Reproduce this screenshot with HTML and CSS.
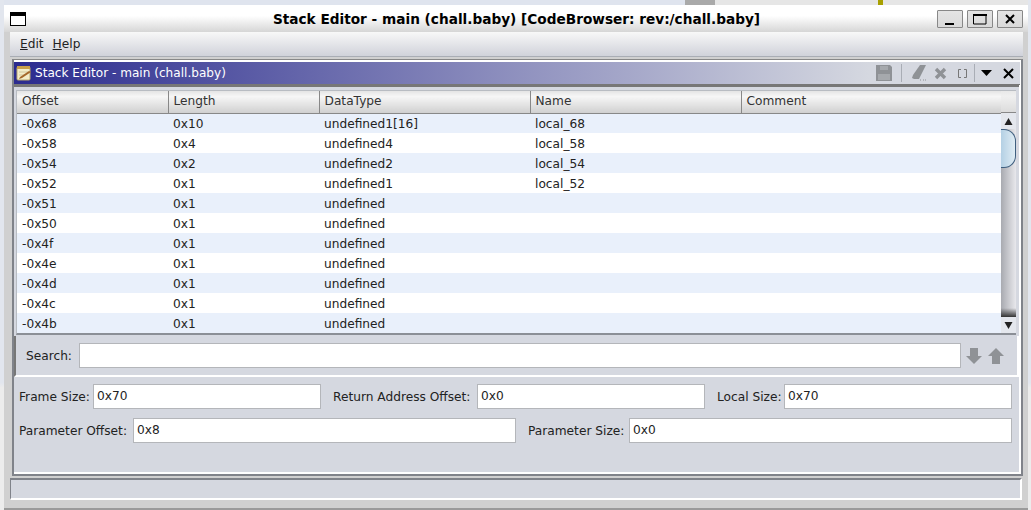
FILE: index.html
```html
<!DOCTYPE html>
<html lang="en">
<head>
  <meta charset="UTF-8" />
  <title>Stack Editor - main (chall.baby)</title>
  <link rel="stylesheet" href="styles.css">
</head>
<body>
  <div class="desktop-strip"></div>
  <div class="window">
    <div class="titlebar">
      <svg class="win-menu" width="16" height="14" viewBox="0 0 16 14"><rect x="0.5" y="0.5" width="15" height="13" fill="#fff" stroke="#000"/><rect x="0" y="0" width="16" height="4" fill="#000"/></svg>
      <span class="win-title">Stack Editor - main (chall.baby) [CodeBrowser: rev:/chall.baby]</span>
      <div class="win-buttons">
        <button class="win-btn"><svg width="14" height="14" viewBox="0 0 14 14"><rect x="2" y="11" width="9" height="2" fill="#000"/></svg></button>
        <button class="win-btn"><svg width="14" height="14" viewBox="0 0 14 14"><path d="M.5 3.500h12.500v8.500H.5z" fill="none" stroke="#000"/><rect x="0" y="2" width="14" height="2" fill="#000"/></svg></button>
        <button class="win-btn"><svg width="14" height="14" viewBox="0 0 14 14"><path d="M3 3l8 8M11 3l-8 8" stroke="#000" stroke-width="2" fill="none"/></svg></button>
      </div>
    </div>

    <div class="menubar">
      <span class="menu-item"><u>E</u>dit</span>
      <span class="menu-item"><u>H</u>elp</span>
    </div>

    <div class="dock">
      <div class="dock-head">
        <svg class="note-icon" width="16" height="16" viewBox="0 0 16 16">
          <rect x="1" y="2" width="13" height="13" rx="1" fill="#f4edc8" stroke="#b9a870"/>
          <rect x="1" y="1" width="13" height="3" fill="#c9a04a"/>
          <path d="M3 7h9M3 10h6" stroke="#cfc7a0"/>
          <path d="M15 7l-9 6-3 1 1-2 9-6z" fill="#a5682a"/>
        </svg>
        <span class="dock-title">Stack Editor - main (chall.baby)</span>
        <div class="dock-tools">
          <svg class="tool-save" width="16" height="16" viewBox="0 0 16 16"><path d="M0 0h14l2 2v14H0z" fill="#8f9296"/><rect x="4" y="1" width="8" height="4" fill="#a6a9ad"/><rect x="2" y="9" width="12" height="6" fill="#a6a9ad"/></svg>
          <span class="tool-sep"></span>
          <svg class="tool-erase" width="16" height="17" viewBox="0 0 16 17"><path d="M9 0h6l-7 14H3l-2-1 1-3z" fill="#8f9296"/><path d="M9 15h1M12 15h1M14 15h1" stroke="#8f9296"/></svg>
          <svg class="tool-delete" width="13" height="13" viewBox="0 0 13 13"><path d="M2 2l9 9M11 2l-9 9" stroke="#8f9296" stroke-width="3.400" fill="none"/></svg>
          <svg class="tool-bracket" width="9" height="9" viewBox="0 0 9 9"><path d="M3 .5H.5v8H3M6 .5h2.500v8H6" stroke="#777" fill="none"/></svg>
          <span class="tool-sep sep-2"></span>
          <svg class="tool-menu" width="11" height="6" viewBox="0 0 11 6"><path d="M0 0h11L5.500 6z" fill="#000"/></svg>
          <svg class="tool-close" width="11" height="11" viewBox="0 0 11 11"><path d="M1 1l9 9M10 1l-9 9" stroke="#000" stroke-width="2" fill="none"/></svg>
        </div>
      </div>

      <div class="dock-body">
        <div class="table-wrap">
          <div class="table-area">
            <table class="stack-table">
              <colgroup>
                <col class="col-offset"><col class="col-length"><col class="col-type"><col class="col-name"><col>
              </colgroup>
              <thead>
                <tr><th>Offset</th><th>Length</th><th>DataType</th><th>Name</th><th>Comment</th></tr>
              </thead>
              <tbody>
                <tr><td>-0x68</td><td>0x10</td><td>undefined1[16]</td><td>local_68</td><td></td></tr>
                <tr><td>-0x58</td><td>0x4</td><td>undefined4</td><td>local_58</td><td></td></tr>
                <tr><td>-0x54</td><td>0x2</td><td>undefined2</td><td>local_54</td><td></td></tr>
                <tr><td>-0x52</td><td>0x1</td><td>undefined1</td><td>local_52</td><td></td></tr>
                <tr><td>-0x51</td><td>0x1</td><td>undefined</td><td></td><td></td></tr>
                <tr><td>-0x50</td><td>0x1</td><td>undefined</td><td></td><td></td></tr>
                <tr><td>-0x4f</td><td>0x1</td><td>undefined</td><td></td><td></td></tr>
                <tr><td>-0x4e</td><td>0x1</td><td>undefined</td><td></td><td></td></tr>
                <tr><td>-0x4d</td><td>0x1</td><td>undefined</td><td></td><td></td></tr>
                <tr><td>-0x4c</td><td>0x1</td><td>undefined</td><td></td><td></td></tr>
                <tr><td>-0x4b</td><td>0x1</td><td>undefined</td><td></td><td></td></tr>
              </tbody>
            </table>
          </div>
          <div class="scrollbar">
            <div class="scroll-corner"></div>
            <div class="scroll-arrow"><svg width="9" height="9" viewBox="0 0 9 9"><path d="M4.500 1L8.500 8H.5z" fill="#222"/></svg></div>
            <div class="scroll-thumb"></div>
            <div class="scroll-rest"></div>
            <div class="scroll-arrow"><svg width="9" height="9" viewBox="0 0 9 9"><path d="M.5 1h8L4.500 8z" fill="#222"/></svg></div>
          </div>
        </div>

        <div class="search-panel">
          <label class="search-label">Search:</label>
          <div class="field search-field"></div>
          <svg class="arrow-down" width="16" height="16" viewBox="0 0 16 16"><path d="M4 0h8v8h4l-8 8-8-8h4z" fill="#8f9296"/></svg>
          <svg class="arrow-up" width="16" height="16" viewBox="0 0 16 16"><path d="M4 16h8V8h4L8 0 0 8h4z" fill="#8f9296"/></svg>
        </div>

        <div class="fields-panel">
          <div class="field-row">
            <label class="l-frame">Frame Size:</label><div class="field f-frame">0x70</div>
            <label class="l-return">Return Address Offset:</label><div class="field f-return">0x0</div>
            <label class="l-local">Local Size:</label><div class="field f-rest">0x70</div>
          </div>
          <div class="field-row">
            <label class="l-param">Parameter Offset:</label><div class="field f-param">0x8</div>
            <label class="l-psize">Parameter Size:</label><div class="field f-rest">0x0</div>
          </div>
        </div>
      </div>
    </div>

    <div class="statusbar"></div>
  </div>
</body>
</html>
```

FILE: styles.css
```css
* {
  box-sizing: border-box;
}

html,
body {
  height: 100%;
}

body {
  margin: 0;
  padding: 0 3px 0 4px;
  overflow: hidden;
  background: linear-gradient(to bottom, #e2e6ee 0%, #e2e6ee 75%, #ececec 76%);
  font-family: "DejaVu Sans", sans-serif;
  font-size: 12.2px;
  color: #222;
}

.desktop-strip {
  height: 5px;
  background: linear-gradient(to right,
    #dfe4ee 0, #dfe4ee 681px,
    #a9a9a9 681px, #a9a9a9 711px,
    #e6e6e6 711px, #e6e6e6 874px,
    #a8a000 874px, #a8a000 879px,
    #e6e6e6 879px);
}

.window {
  height: 503px;
  display: flex;
  flex-direction: column;
  background: #d0d0d0;
  box-shadow: 0 2px 0 #9a9a9a;
}

.titlebar {
  height: 27px;
  flex: none;
  display: grid;
  grid-template-columns: 1fr auto 1fr;
  align-items: center;
  padding: 0 5px 0 6px;
  background: linear-gradient(to bottom, #fff 0%, #fff 40%, #d6d6d6 100%);
}

.win-menu {
  margin-top: 1px;
}

.win-title {
  font-weight: bold;
  font-size: 13.67px;
  color: #000;
  margin-top: 1px;
}

.win-buttons {
  display: flex;
  justify-content: flex-end;
  gap: 4px;
  margin-top: 1px;
}

.win-btn {
  width: 26px;
  height: 18px;
  padding: 0;
  display: flex;
  align-items: center;
  justify-content: center;
  border: 1px solid #888;
  border-radius: 1px;
  background: linear-gradient(to bottom, #e4e4e4, #dadada);
}

.menubar {
  height: 25px;
  flex: none;
  margin: 0 5px 0 6px;
  display: flex;
  gap: 9px;
  align-items: center;
  padding: 0 10px;
  background: linear-gradient(to bottom, #f8f8f8, #d0d2da);
  border-bottom: 1px solid #a9adb5;
}

.dock {
  margin: 2px 5px 0 8px;
  height: 417px;
  flex: none;
  display: flex;
  flex-direction: column;
  border-top: 1px solid #888;
  border-left: 2px solid #80838a;
  border-bottom: 2px solid #80838a;
  border-right: 2px solid #80838a;
  background: #fff;
  padding: 2px 1px 2px 0;
}

.dock-head {
  height: 23px;
  flex: none;
  display: flex;
  align-items: center;
  padding: 0 0 0 2px;
  background: linear-gradient(to right, #2b2b8f 0%, #d5d8e0 85%);
  border-bottom: 1px solid #777;
}

.note-icon {
  margin-right: 3px;
}

.dock-title {
  flex: 1;
  color: #fff;
  font-size: 12.1px;
}

.dock-tools {
  display: flex;
  align-items: center;
}

.tool-sep {
  width: 1px;
  height: 18px;
  margin-left: 9px;
  background: #a9adb5;
}

.tool-erase {
  margin-left: 9px;
}

.tool-delete {
  margin-left: 7px;
}

.tool-bracket {
  margin-left: 11px;
}

.sep-2 {
  margin-left: 7px;
}

.tool-menu {
  margin-left: 6px;
}

.tool-close {
  margin-left: 11px;
  margin-right: 6px;
}

.dock-body {
  flex: 1;
  display: flex;
  flex-direction: column;
  background: #d5d8e0;
  border-top: 2px solid #777;
  margin-right: 1px;
  min-height: 0;
}

.table-wrap {
  height: 245px;
  flex: none;
  margin: 3px 3px 0 2px;
  display: flex;
  background: #fff;
  border-top: 1px solid #b8bcc2;
  border-left: 1px solid #b8bcc2;
  border-bottom: 2px solid #8b8f96;
  overflow: hidden;
}

.table-area {
  flex: 1;
  overflow: hidden;
}

.stack-table {
  width: 100%;
  border-collapse: collapse;
  table-layout: fixed;
}

.col-offset {
  width: 151px;
}

.col-length {
  width: 151px;
}

.col-type {
  width: 211px;
}

.col-name {
  width: 211px;
}

.stack-table th {
  height: 22px;
  padding: 0 5px 1px;
  text-align: left;
  font-weight: normal;
  color: #333;
  background: linear-gradient(to bottom, #e4e4e4, #f6f6f6 25%, #d0d0d0);
  border-right: 1px solid #888;
  border-bottom: 1px solid #888;
}

.stack-table th:last-child {
  border-right: none;
}

.stack-table td {
  height: 20px;
  padding: 1px 5px 0;
  white-space: nowrap;
  color: #222;
}

.stack-table tbody tr:nth-child(odd) {
  background: #e9f0fb;
}

.scrollbar {
  width: 15px;
  flex: none;
  display: flex;
  flex-direction: column;
  background: linear-gradient(to right, #a8aab0, #e8e8ec);
}

.scroll-corner {
  height: 22px;
  flex: none;
  background: linear-gradient(to bottom, #e8e8e8, #f0f0f0 25%, #dcdcdc);
  border-bottom: 1px solid #888;
}

.scroll-arrow {
  height: 16px;
  flex: none;
  display: flex;
  align-items: center;
  justify-content: center;
  background: #e4e7ed;
}

.scroll-thumb {
  height: 39px;
  flex: none;
  background: linear-gradient(to right, #b4d0e4, #dfecf4);
  border: 1px solid #3f5f7f;
  border-left: none;
  border-radius: 0 12px 12px 0;
}

.scroll-rest {
  flex: 1;
  background: linear-gradient(to bottom, transparent 94%, #333 100%);
}

.search-panel {
  height: 41px;
  flex: none;
  margin: 1px 2px 0 0;
  display: flex;
  align-items: center;
  padding: 0 13px 0 10px;
  border-left: 2px solid #777;
  border-bottom: 2px solid #fff;
  box-shadow: 2px 0 0 #fff;
}

.search-label {
  width: 53px;
}

.search-field {
  flex: 1;
}

.arrow-down {
  margin-left: 5px;
}

.arrow-up {
  margin-left: 6px;
}

.field {
  height: 25px;
  line-height: 23px;
  padding: 0 3px;
  background: #fff;
  border: 1px solid #b4b6ba;
  color: #222;
}

.fields-panel {
  flex: 1;
  display: flex;
  flex-direction: column;
  gap: 9px;
  padding: 7px 7px 0 5px;
}

.field-row {
  display: flex;
  align-items: center;
}

.l-frame {
  width: 74px;
}

.l-return {
  width: 144px;
  margin-left: 12px;
}

.l-local {
  width: 67px;
  margin-left: 12px;
}

.l-param {
  width: 114px;
}

.l-psize {
  width: 101px;
  margin-left: 12px;
}

.f-frame,
.f-return {
  width: 228px;
}

.f-param {
  width: 383px;
}

.f-rest {
  flex: 1;
}

.statusbar {
  margin: 2px 6px 0 6px;
  height: 22px;
  flex: none;
  background: #d5d8e0;
  border-top: 2px solid #80838a;
  border-left: 1px solid #80838a;
  border-bottom: 2px solid #fff;
  border-right: 2px solid #fff;
}
```
